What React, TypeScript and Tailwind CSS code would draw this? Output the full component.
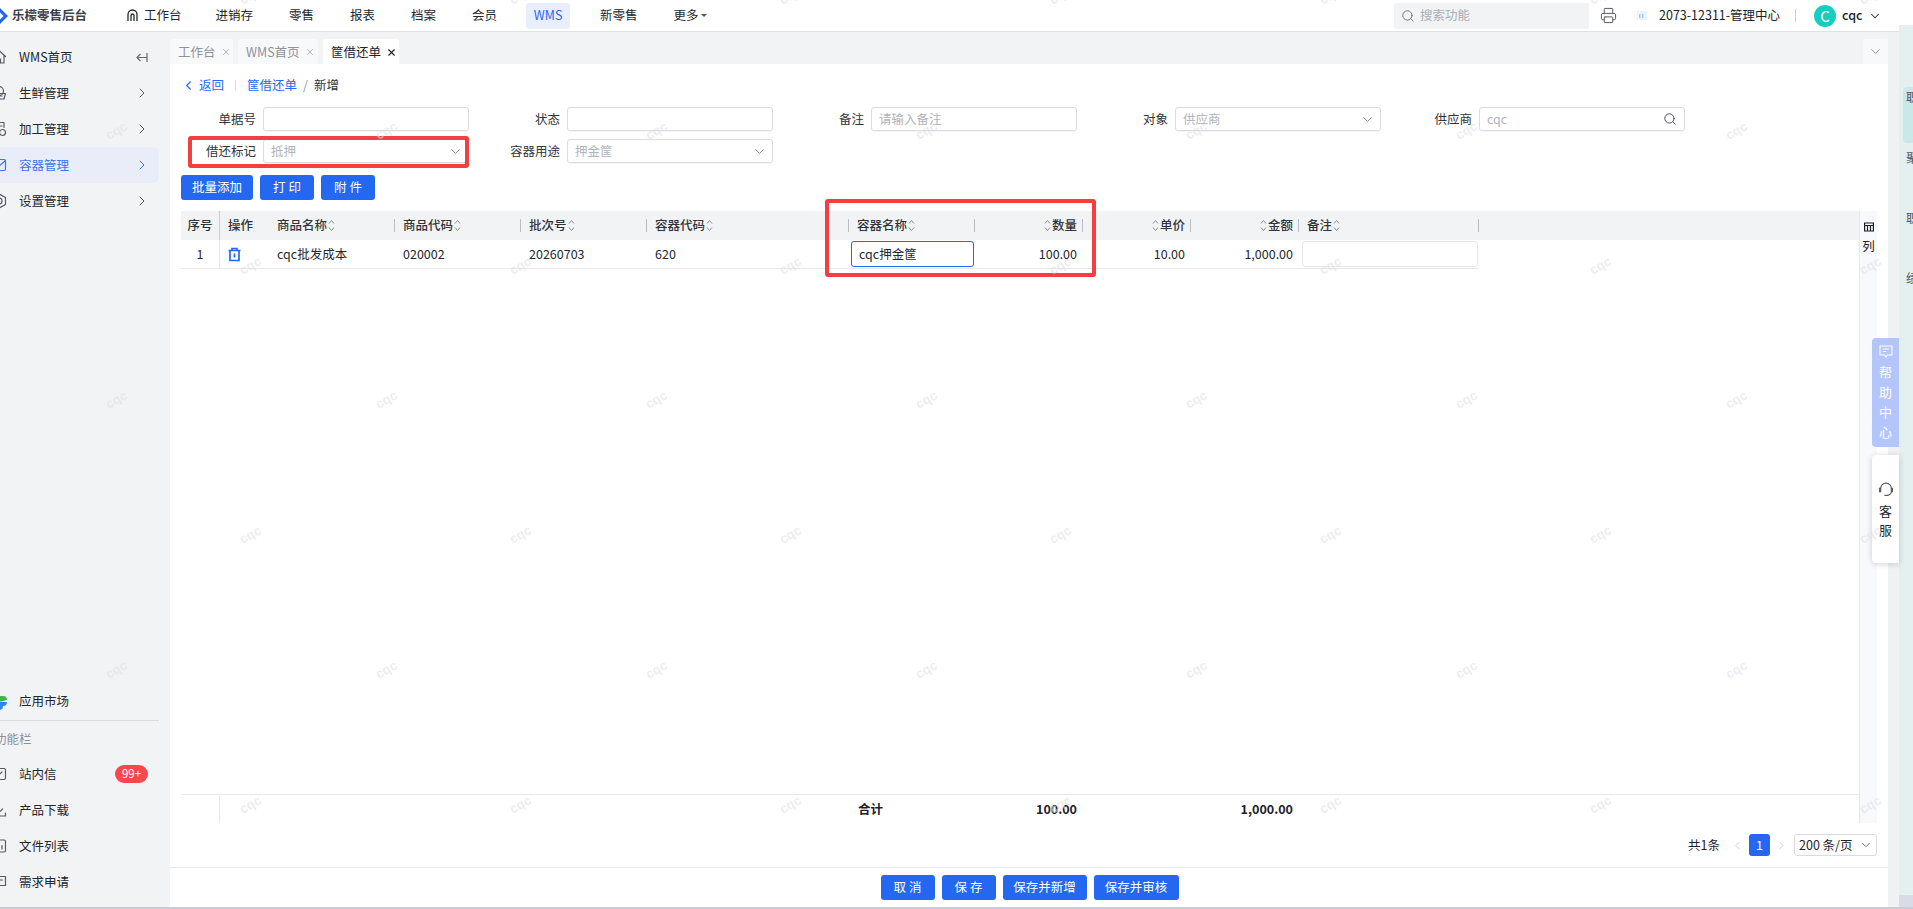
import React from "react";
import { ChevronDown, ChevronLeft, ChevronRight, Search, X, Printer } from "lucide-react";

const Sort = () => (
  <svg width="7" height="13" viewBox="0 0 7 13" fill="none" stroke="#8a8f99" strokeWidth="1" className="shrink-0">
    <path d="M1 4.5 3.5 1.5 6 4.5M1 8.5 3.5 11.5 6 8.5" />
  </svg>
);

const Ico = ({ children, color = "#555b66" }: { children: React.ReactNode; color?: string }) => (
  <svg width="16" height="16" viewBox="0 0 16 16" fill="none" stroke={color} strokeWidth="1.2" strokeLinejoin="round" strokeLinecap="round" className="shrink-0 -ml-[9px]">
    {children}
  </svg>
);

const SideItem = ({ icon, label, chevron, active }: { icon: React.ReactNode; label: string; chevron?: boolean; active?: boolean }) => (
  <div className={`flex h-[36px] w-[159px] items-center gap-[12px] rounded-r-[6px] ${active ? "bg-[#e8edf9] text-[#3f72ef]" : "text-[#23272e]"}`}>
    {icon}
    <span className="flex-1">{label}</span>
    {chevron && <ChevronRight size={16} strokeWidth={1.5} className={`mr-[9px] ${active ? "text-[#3f72ef]" : "text-[#555b66]"}`} />}
  </div>
);

const Field = ({ label, value, placeholder, select, search, box }: { label: string; value?: string; placeholder?: string; select?: boolean; search?: boolean; box?: boolean }) => (
  <div className="relative flex w-[304px] items-center gap-[7px]">
    {box && <div className="absolute left-[23px] top-[-3px] z-10 h-[32px] w-[281px] rounded-[3px] border-[4px] border-[#f33f3f]" />}
    <span className="w-[91px] text-right text-[#30343b]">{label}</span>
    <div className="flex h-[24px] w-[206px] items-center justify-between rounded-[3px] border border-[#d9dce2] bg-white px-[7px] shadow-[0_1px_1px_rgba(0,0,0,0.04)]">
      <span className="text-[#b0b4bb]">{value ?? placeholder}</span>
      {select && <ChevronDown size={15} strokeWidth={1.3} className="-mr-[2px] text-[#666b75]" />}
      {search && <Search size={14} strokeWidth={1.6} className="text-[#444952]" />}
    </div>
  </div>
);

const Btn = ({ children, w }: { children: React.ReactNode; w: string }) => (
  <div className={`flex h-[25px] items-center justify-center rounded-[3px] bg-[#2468f2] text-white ${w}`}>{children}</div>
);

const TableCols = "grid grid-cols-[39px_49px_126px_126px_126px_202px_126px_108px_108px_108px_180px_1fr]";

const Head = ({ label, right, sep = true }: { label: string; right?: boolean; sep?: boolean }) => (
  <div className={`relative flex items-center gap-[1px] ${right ? "justify-end pr-[6px]" : "pl-[8px]"}`}>
    {right && <Sort />}
    <span>{label}</span>
    {!right && <Sort />}
    {sep && <span className="absolute right-0 top-[8px] h-[13px] w-px bg-[#b9bdc5]" />}
  </div>
);

const Tab = ({ label, active, w }: { label: string; active?: boolean; w: string }) => (
  <div className={`flex h-[25px] items-center gap-[5px] rounded-t-[3px] pl-[8px] pt-[1px] ${w} ${active ? "bg-white text-[#1d2129]" : "bg-[#f8f9fa] text-[#8d929b]"}`}>
    <span>{label}</span>
    <X size={active ? 11 : 10} strokeWidth={active ? 2.4 : 1.6} />
  </div>
);

const rows = [-4, 131, 266, 400, 535, 670, 805];

export default function App() {
  return (
    <div className="relative flex h-[909px] w-[1913px] flex-col overflow-hidden bg-white text-[12.5px] leading-none text-[#1d2129] [font-family:'Noto_Sans_CJK_SC',sans-serif]">
      {/* top bar */}
      <header className="flex h-[32px] shrink-0 items-center border-b border-[#dfe1e5] bg-white">
        <svg width="8" height="20" viewBox="0 0 8 20" className="mr-[4px] shrink-0">
          <path d="M0 2 8 10 0 18V13.500L3.500 10 0 6.500Z" fill="#2468f2" />
        </svg>
        <span className="w-[115px] font-bold text-[#3d4149]">乐檬零售后台</span>
        <div className="flex items-center gap-[36px] text-[#23272e]">
          <div className="flex items-center gap-[6px]">
            <svg width="11" height="13" viewBox="0 0 11 13" fill="none" stroke="#23272e" strokeWidth="1.3"><path d="M1 12V5.500a4.500 4.500 0 0 1 9 0V12M4 12V6.500a1.500 1.500 0 0 1 3 0V12" /></svg>
            <span>工作台</span>
          </div>
          <span className="-ml-[2px]">进销存</span>
          <span>零售</span>
          <span>报表</span>
          <span>档案</span>
          <span>会员</span>
          <span className="-mx-[7px] flex h-[26px] w-[44px] items-center justify-center rounded-[3px] bg-[#e8eefc] text-[#2468f2]">WMS</span>
          <span className="ml-[1px]">新零售</span>
          <span className="flex items-center gap-[2px]">更多<span className="h-0 w-0 border-x-[3px] border-t-[3px] border-x-transparent border-t-[#555]" /></span>
        </div>
        <div className="ml-auto flex items-center">
          <div className="flex h-[26px] w-[195px] items-center gap-[5px] rounded-[3px] bg-[#f2f3f5] px-[7px] text-[#a9adb5]">
            <Search size={14} strokeWidth={1.5} className="text-[#666b75]" />
            <span>搜索功能</span>
          </div>
          <Printer size={17} strokeWidth={1.4} className="ml-[11px] text-[#555b66]" />
          <svg width="10" height="9" viewBox="0 0 10 9" className="ml-[20px]"><rect width="10" height="9" fill="#eaf2fd" /><rect x="2" y="3" width="1.500" height="4" fill="#a9c8f0" /><rect x="5" y="3" width="1.500" height="4" fill="#a9c8f0" /></svg>
          <span className="ml-[12px] w-[122px] whitespace-nowrap text-[#1d2129]">2073-12311-管理中心</span>
          <span className="ml-[14px] h-[13px] w-px bg-[#c9ccd2]" />
          <span className="ml-[18px] flex h-[22px] w-[22px] items-center justify-center rounded-full bg-[#14cfc0] text-[15px] text-white">C</span>
          <span className="ml-[6px] w-[26px] font-medium">cqc</span>
          <ChevronDown size={14} strokeWidth={1.8} className="mr-[31px] text-[#333]" />
        </div>
      </header>

      <div className="flex min-h-0 flex-1">
        {/* sidebar */}
        <aside className="flex w-[170px] shrink-0 flex-col overflow-hidden bg-[#f2f3f5] pt-[7px]">
          <div className="relative">
            <SideItem label="WMS首页" icon={<Ico><path d="M1 7.500 8 1.500l6.500 6M3 6.500V14h10V6.500M6.500 14v-4h3v4" /></Ico>} />
            <svg width="13" height="11" viewBox="0 0 13 11" fill="none" stroke="#666b75" strokeWidth="1.2" className="absolute left-[135px] top-[13px]"><path d="M12 5.500H2M5.500 2 2 5.500 5.500 9M12 1v9" /></svg>
          </div>
          <SideItem chevron label="生鲜管理" icon={<Ico><circle cx="8" cy="6" r="4.500" /><path d="M1.500 8.500h13L13 14H3ZM5 11h6" /></Ico>} />
          <SideItem chevron label="加工管理" icon={<Ico><path d="M13 6.500V1.500H3v13h4M6 5h5" /><circle cx="11.500" cy="11.500" r="3" /></Ico>} />
          <SideItem active chevron label="容器管理" icon={<Ico color="#3f72ef"><rect x="1.500" y="2.500" width="13" height="11" rx="1.500" /><path d="M2 9l3-2 3 2 6-5" /></Ico>} />
          <SideItem chevron label="设置管理" icon={<Ico><path d="M8 1 14.500 4.500v7L8 15 1.500 11.500v-7Z" /><circle cx="8" cy="8" r="3" /></Ico>} />

          <div className="mt-auto flex h-[36px] items-center gap-[12px] text-[#23272e]">
            <svg width="16" height="16" viewBox="0 0 16 16" className="-ml-[9px] shrink-0">
              <path d="M8 8V2h4a4 4 0 0 1 4 4Z" fill="#38b94a" />
              <path d="M8 8H16a4 4 0 0 1-4 4 4 4 0 0 1-4 4Z" fill="#2e86f5" />
              <path d="M8 8H2a3 3 0 0 1 3-4h3Z" fill="#f5b62e" />
            </svg>
            <span>应用市场</span>
          </div>
          <div className="w-[159px] border-t border-[#d9dbe0] pt-[12px] text-[#8d929b]"><span className="-ml-[6px] block">功能栏</span></div>
          <div className="h-[11px]" />
          <div className="relative">
            <SideItem label="站内信" icon={<Ico><rect x="1.500" y="2.500" width="13" height="11" rx="1.500" /><path d="M4 9l2 1.500L11 6" /></Ico>} />
            <span className="absolute left-[115px] top-[9px] flex h-[18px] w-[33px] items-center justify-center rounded-full bg-[#f9474f] text-[11.500px] text-white">99+</span>
          </div>
          <SideItem label="产品下载" icon={<Ico><path d="M8 1.500V10M4.500 7 8 10.500 11.500 7M1.500 11v3h13v-3" /></Ico>} />
          <SideItem label="文件列表" icon={<Ico><rect x="1.500" y="2" width="13" height="12" rx="1.500" /><path d="M5 11V8M8 11V5.500M11 11V7.500" /></Ico>} />
          <SideItem label="需求申请" icon={<Ico><path d="M1.500 2.500h13v9H6L3.500 14v-2.500h-2ZM4.500 6h7M4.500 8.500h4" /></Ico>} />
          <div className="h-[7px]" />
        </aside>

        {/* main */}
        <main className="relative flex w-[1718px] shrink-0 flex-col">
          <div className="flex h-[32px] shrink-0 items-end justify-between bg-[#f2f3f5]">
            <div className="flex gap-[5px]">
              <Tab w="w-[63px]" label="工作台" />
              <Tab w="w-[80px]" label="WMS首页" />
              <Tab w="w-[76px]" active label="筐借还单" />
            </div>
            <div className="flex h-[25px] w-[25px] items-center justify-center rounded-t-[3px] bg-[#f8f9fa]">
              <ChevronDown size={15} strokeWidth={1.4} className="text-[#80858e]" />
            </div>
          </div>

          <div className="flex min-h-0 flex-1 flex-col bg-white">
            <div className="mt-[11px] flex h-[20px] items-center pl-[11px] text-[#2468f2]">
              <ChevronLeft size={15} strokeWidth={1.8} />
              <span className="ml-[3px]">返回</span>
              <span className="ml-[11px] mr-[11px] h-[11px] w-px bg-[#d9dce2]" />
              <span>筐借还单</span>
              <span className="mx-[6px] text-[#8d929b]">/</span>
              <span className="text-[#30343b]">新增</span>
            </div>

            <div className="-ml-[5px] mt-[12px] flex flex-col gap-[8px]">
              <div className="flex h-[24px]">
                <Field label="单据号" />
                <Field label="状态" />
                <Field label="备注" placeholder="请输入备注" />
                <Field label="对象" placeholder="供应商" select />
                <Field label="供应商" placeholder="cqc" search />
              </div>
              <div className="flex h-[24px]">
                <Field box label="借还标记" value="抵押" select />
                <Field label="容器用途" value="押金筐" select />
              </div>
            </div>

            <div className="ml-[11px] mt-[12px] flex gap-[7px]">
              <Btn w="w-[72px]">批量添加</Btn>
              <Btn w="w-[54px]">打 印</Btn>
              <Btn w="w-[54px]">附 件</Btn>
            </div>

            {/* table */}
            <div className="relative ml-[11px] mr-[11px] mt-[11px] flex min-h-0 flex-1">
              <div className="absolute left-[644px] top-[-12px] z-10 h-[78px] w-[271px] rounded-[3px] border-[4px] border-[#f33f3f]" />
              <div className="flex min-w-0 flex-1 flex-col">
                <div className={`${TableCols} h-[29px] bg-[#f2f3f5] font-medium text-[#30343b]`}>
                  <div className="flex items-center justify-center border-r border-[#c9ccd2]">序号</div>
                  <div className="flex items-center pl-[8px]">操作</div>
                  <Head label="商品名称" />
                  <Head label="商品代码" />
                  <Head label="批次号" />
                  <Head label="容器代码" />
                  <Head label="容器名称" />
                  <Head label="数量" right />
                  <Head label="单价" right />
                  <Head label="金额" right />
                  <Head label="备注" />
                  <div />
                </div>
                <div className={`${TableCols} h-[29px] text-[#23272e]`}>
                  <div className="flex items-center justify-center border-r border-b border-[#e6e8eb] pt-[1px]">1</div>
                  <div className="flex items-center border-b border-[#e6e8eb] pl-[7px]">
                    <svg width="15" height="15" viewBox="0 0 15 15" fill="none" stroke="#2468f2" strokeWidth="1.700"><path d="M1.500 3.500h12M5 3.500V1.500h5v2M3 3.500V13.500h9V3.500M7.500 6.500v4" /></svg>
                  </div>
                  <div className="flex items-center border-b border-[#e6e8eb] pl-[8px] pt-[1px]">cqc批发成本</div>
                  <div className="flex items-center border-b border-[#e6e8eb] pl-[8px] pt-[1px]">020002</div>
                  <div className="flex items-center border-b border-[#e6e8eb] pl-[8px] pt-[1px]">20260703</div>
                  <div className="flex items-center border-b border-[#e6e8eb] pl-[8px] pt-[1px]">620</div>
                  <div className="flex items-center border-b border-[#e6e8eb] pl-[2px]">
                    <div className="flex h-[26px] w-[123px] items-center rounded-[3px] border border-[#2468f2] pl-[7px]">cqc押金筐</div>
                  </div>
                  <div className="flex items-center justify-end border-b border-[#e6e8eb] pr-[6px] pt-[1px]">100.00</div>
                  <div className="flex items-center justify-end border-b border-[#e6e8eb] pr-[6px] pt-[1px]">10.00</div>
                  <div className="flex items-center justify-end border-b border-[#e6e8eb] pr-[6px] pt-[1px]">1,000.00</div>
                  <div className="flex items-center border-b border-[#e6e8eb] pl-[3px]">
                    <div className="h-[26px] w-[176px] rounded-[3px] border border-[#e6e8eb]" />
                  </div>
                </div>
                <div className={`${TableCols} mt-auto h-[29px] border-t border-[#e6e8eb] pt-[1px] font-bold text-[#1d2129]`}>
                  <div className="border-r border-[#e6e8eb]" />
                  <div />
                  <div />
                  <div />
                  <div />
                  <div />
                  <div className="flex items-center pl-[9px]">合计</div>
                  <div className="flex items-center justify-end pr-[6px]">100.00</div>
                  <div />
                  <div className="flex items-center justify-end pr-[6px]">1,000.00</div>
                </div>
              </div>
              <div className="flex w-[18px] shrink-0 flex-col items-center border-l border-[#e6e8eb] bg-[#f8f9fc] pt-[11px]">
                <svg width="10" height="10" viewBox="0 0 10 10" fill="none" stroke="#1d2129" strokeWidth="1.2"><path d="M.6 1h8.800v8H.6ZM.6 3.500h8.800M3.500 3.500V9M6.500 3.500V9" /></svg>
                <span className="mt-[8px]">列</span>
              </div>
            </div>

            {/* pagination */}
            <div className="flex h-[44px] shrink-0 items-center justify-end pr-[11px]">
              <span>共1条</span>
              <ChevronLeft size={13} strokeWidth={1.2} className="ml-[11px] text-[#b0b4bb]" />
              <span className="ml-[5px] flex h-[22px] w-[21px] items-center justify-center rounded-[3px] bg-[#2468f2] text-white">1</span>
              <ChevronRight size={13} strokeWidth={1.2} className="ml-[5px] text-[#b0b4bb]" />
              <div className="ml-[6px] flex h-[22px] w-[83px] items-center justify-between rounded-[3px] border border-[#d9dce2] pl-[4px] pr-[3px]">
                <span className="whitespace-nowrap">200 条/页</span>
                <ChevronDown size={14} strokeWidth={1.3} className="text-[#555b66]" />
              </div>
            </div>

            {/* footer */}
            <div className="flex h-[40px] shrink-0 items-center justify-center gap-[7px] border-t border-[#e6e8eb] pl-[1px]">
              <Btn w="w-[54px]">取 消</Btn>
              <Btn w="w-[54px]">保 存</Btn>
              <Btn w="w-[84px]">保存并新增</Btn>
              <Btn w="w-[85px]">保存并审核</Btn>
            </div>
          </div>
        </main>

        {/* right edge */}
        <div className="w-[11px] shrink-0 bg-[#f0f1f3]" />
        <div className="relative -mt-[7px] flex w-[14px] shrink-0 flex-col overflow-hidden bg-[#e4f0f0] text-[#555b66]">
          <div className="absolute left-[4px] top-[62px] h-[56px] w-[12px] rounded-l-[4px] bg-[#c9e9e9]" />
          <span className="absolute left-[7px] top-[66px] whitespace-nowrap">职</span>
          <span className="absolute left-[7px] top-[127px] whitespace-nowrap">聚</span>
          <span className="absolute left-[7px] top-[187px] whitespace-nowrap">职</span>
          <span className="absolute left-[7px] top-[247px] whitespace-nowrap">绩</span>
          <div className="mt-auto h-[12px] bg-[#d9dce6]" />
        </div>
      </div>
      <div className="h-[2px] shrink-0 bg-[#c9ccd2]" />

      {/* floating help */}
      <div className="absolute left-[1872px] top-[338px] flex h-[109px] w-[27px] flex-col items-center gap-[7px] rounded-l-[4px] bg-[#b3c5fb] pt-[7px] text-[13px] text-white">
        <svg width="14" height="13" viewBox="0 0 14 13" fill="none" stroke="white" strokeWidth="1.100"><path d="M1 1h12v9H8.500L7 12 5.500 10H1ZM4 4h6M4 6.500h3" /></svg>
        <span>帮</span>
        <span>助</span>
        <span>中</span>
        <span>心</span>
      </div>
      <div className="absolute left-[1872px] top-[455px] flex h-[108px] w-[27px] flex-col items-center gap-[6px] rounded-l-[4px] bg-white pt-[27px] text-[13px] text-[#23272e] shadow-[0_1px_6px_rgba(0,0,0,0.18)]">
        <svg width="16" height="16" viewBox="0 0 15 14" fill="none" stroke="#555b66" strokeWidth="1.100"><path d="M2.500 7V5.500a5 5 0 0 1 10 0V7M2.500 5.500H1.500v3h1ZM12.500 5.500h1v3h-1ZM12.500 8.500c0 2-2 3.500-4 3.500H6" /></svg>
        <span>客</span>
        <span>服</span>
      </div>

      {/* watermark */}
      <div className="pointer-events-none absolute inset-0 z-20 overflow-hidden">
        {rows.map((y, r) =>
          Array.from({ length: 8 }).map((_, c) => (
            <span
              key={`${r}-${c}`}
              className="absolute -rotate-[30deg] text-[13px] font-bold text-[#dfe1e5]/60 [font-family:'Liberation_Sans',sans-serif]"
              style={{ left: (r % 2 === 0 ? -31 : 105) + 270 * c, top: y - 7 }}
            >
              cqc
            </span>
          ))
        )}
      </div>
    </div>
  );
}
